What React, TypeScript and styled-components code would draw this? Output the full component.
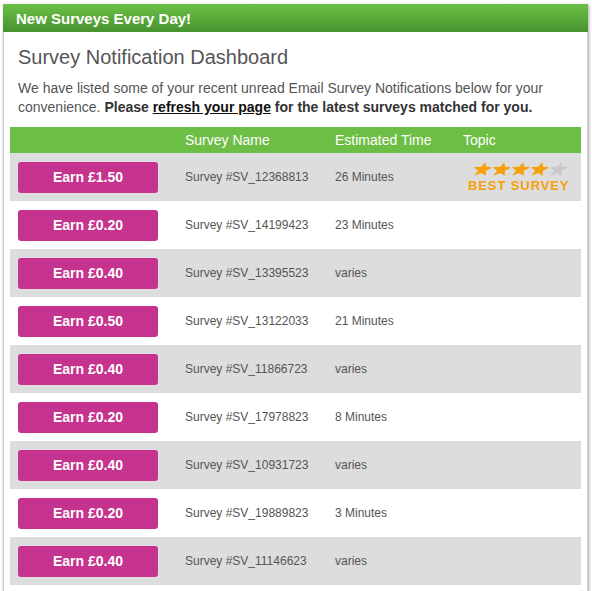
import React from "react";
import styled, { createGlobalStyle } from "styled-components";

const Global = createGlobalStyle`
  html, body { margin: 0; padding: 0; background: #fff; }
  body { font-family: "Liberation Sans", Arial, sans-serif; }
`;

const Page = styled.div`
  padding: 4px 4px 0 3px;
`;

const Panel = styled.div`
  border: 1px solid #c9c9c9;
  border-bottom: none;
  box-shadow: 1px 1px 3px rgba(0, 0, 0, 0.35);
  background: #fff;
  padding-bottom: 8px;
`;

const Header = styled.div`
  height: 28px;
  margin: -1px -1px 0 -1px;
  padding: 1px 0 0 13px;
  box-sizing: border-box;
  background: linear-gradient(#6cc044, #47922f);
  color: #fff;
  font-size: 15px;
  font-weight: bold;
  line-height: 27px;
`;

const Body = styled.div`
  padding: 0 5px 0 6px;
`;

const Title = styled.h1`
  margin: 13px 0 0 8px;
  font-size: 20px;
  line-height: 24px;
  font-weight: normal;
  color: #555;
`;

const Intro = styled.p`
  margin: 10px 0 0 8px;
  font-size: 14px;
  line-height: 19px;
  color: #555;
  b {
    color: #333;
  }
  a {
    color: #111;
    font-weight: bold;
    text-decoration: underline;
  }
`;

const Table = styled.table`
  margin-top: 10px;
  width: 571px;
  border-collapse: collapse;
  table-layout: fixed;
`;

const HeadCell = styled.th<{ $w: number }>`
  width: ${(p) => p.$w}px;
  height: 26px;
  padding: 0;
  background: #6dbe45;
  color: #fff;
  font-size: 14px;
  font-weight: normal;
  text-align: left;
`;

const Row = styled.tr<{ $alt: boolean }>`
  background: ${(p) => (p.$alt ? "#dddddd" : "#ffffff")};
`;

const Cell = styled.td`
  height: 48px;
  padding: 0;
  font-size: 12px;
  color: #555;
  vertical-align: middle;
`;

const ButtonCell = styled(Cell)`
  padding-left: 8px;
`;

const EarnButton = styled.button`
  display: block;
  width: 140px;
  height: 31px;
  border: none;
  border-radius: 3px;
  background: #c6338e;
  color: #fff;
  font-family: "Liberation Sans", Arial, sans-serif;
  font-size: 14px;
  font-weight: bold;
  padding: 0;
  cursor: pointer;
`;

const Badge = styled.div`
  display: flex;
  flex-direction: column;
  align-items: flex-start;
  padding-left: 5px;
`;

const Stars = styled.div`
  display: flex;
  margin-left: 4px;
`;

const BestLabel = styled.div`
  margin-top: 3px;
  font-size: 13px;
  font-weight: bold;
  letter-spacing: 0.9px;
  color: #f5a00c;
  line-height: 13px;
`;

const Star = ({ on }: { on: boolean }) => (
  <svg width="19" height="14" viewBox="0 0 19 14">
    <g transform="skewX(-22) translate(4 0)">
      <polygon
        points="9.5,0.3 12,4.8 19,5.2 13.4,8.8 15.2,13.7 9.5,10.9 3.8,13.7 5.6,8.8 0,5.2 7,4.8"
        fill={on ? "#f5a00c" : "#c9c9c9"}
      />
    </g>
  </svg>
);

const rows = [
  { earn: "£1.50", id: "SV_12368813", time: "26 Minutes", best: true },
  { earn: "£0.20", id: "SV_14199423", time: "23 Minutes" },
  { earn: "£0.40", id: "SV_13395523", time: "varies" },
  { earn: "£0.50", id: "SV_13122033", time: "21 Minutes" },
  { earn: "£0.40", id: "SV_11866723", time: "varies" },
  { earn: "£0.20", id: "SV_17978823", time: "8 Minutes" },
  { earn: "£0.40", id: "SV_10931723", time: "varies" },
  { earn: "£0.20", id: "SV_19889823", time: "3 Minutes" },
  { earn: "£0.40", id: "SV_11146623", time: "varies" },
];

export default function App() {
  return (
    <Page>
      <Global />
      <Panel>
        <Header>New Surveys Every Day!</Header>
        <Body>
          <Title>Survey Notification Dashboard</Title>
          <Intro>
            We have listed some of your recent unread Email Survey Notifications below for your
            convenience. <b>Please </b>
            <a href="#">refresh your page</a>
            <b> for the latest surveys matched for you.</b>
          </Intro>
          <Table>
            <thead>
              <tr>
                <HeadCell $w={175}></HeadCell>
                <HeadCell $w={150}>Survey Name</HeadCell>
                <HeadCell $w={128}>Estimated Time</HeadCell>
                <HeadCell $w={118}>Topic</HeadCell>
              </tr>
            </thead>
            <tbody>
              {rows.map((r, i) => (
                <Row key={r.id} $alt={i % 2 === 0}>
                  <ButtonCell>
                    <EarnButton>Earn {r.earn}</EarnButton>
                  </ButtonCell>
                  <Cell>Survey #{r.id}</Cell>
                  <Cell>{r.time}</Cell>
                  <Cell>
                    {r.best && (
                      <Badge>
                        <Stars>
                          {[0, 1, 2, 3, 4].map((s) => (
                            <Star key={s} on={s < 4} />
                          ))}
                        </Stars>
                        <BestLabel>BEST SURVEY</BestLabel>
                      </Badge>
                    )}
                  </Cell>
                </Row>
              ))}
            </tbody>
          </Table>
        </Body>
      </Panel>
    </Page>
  );
}
